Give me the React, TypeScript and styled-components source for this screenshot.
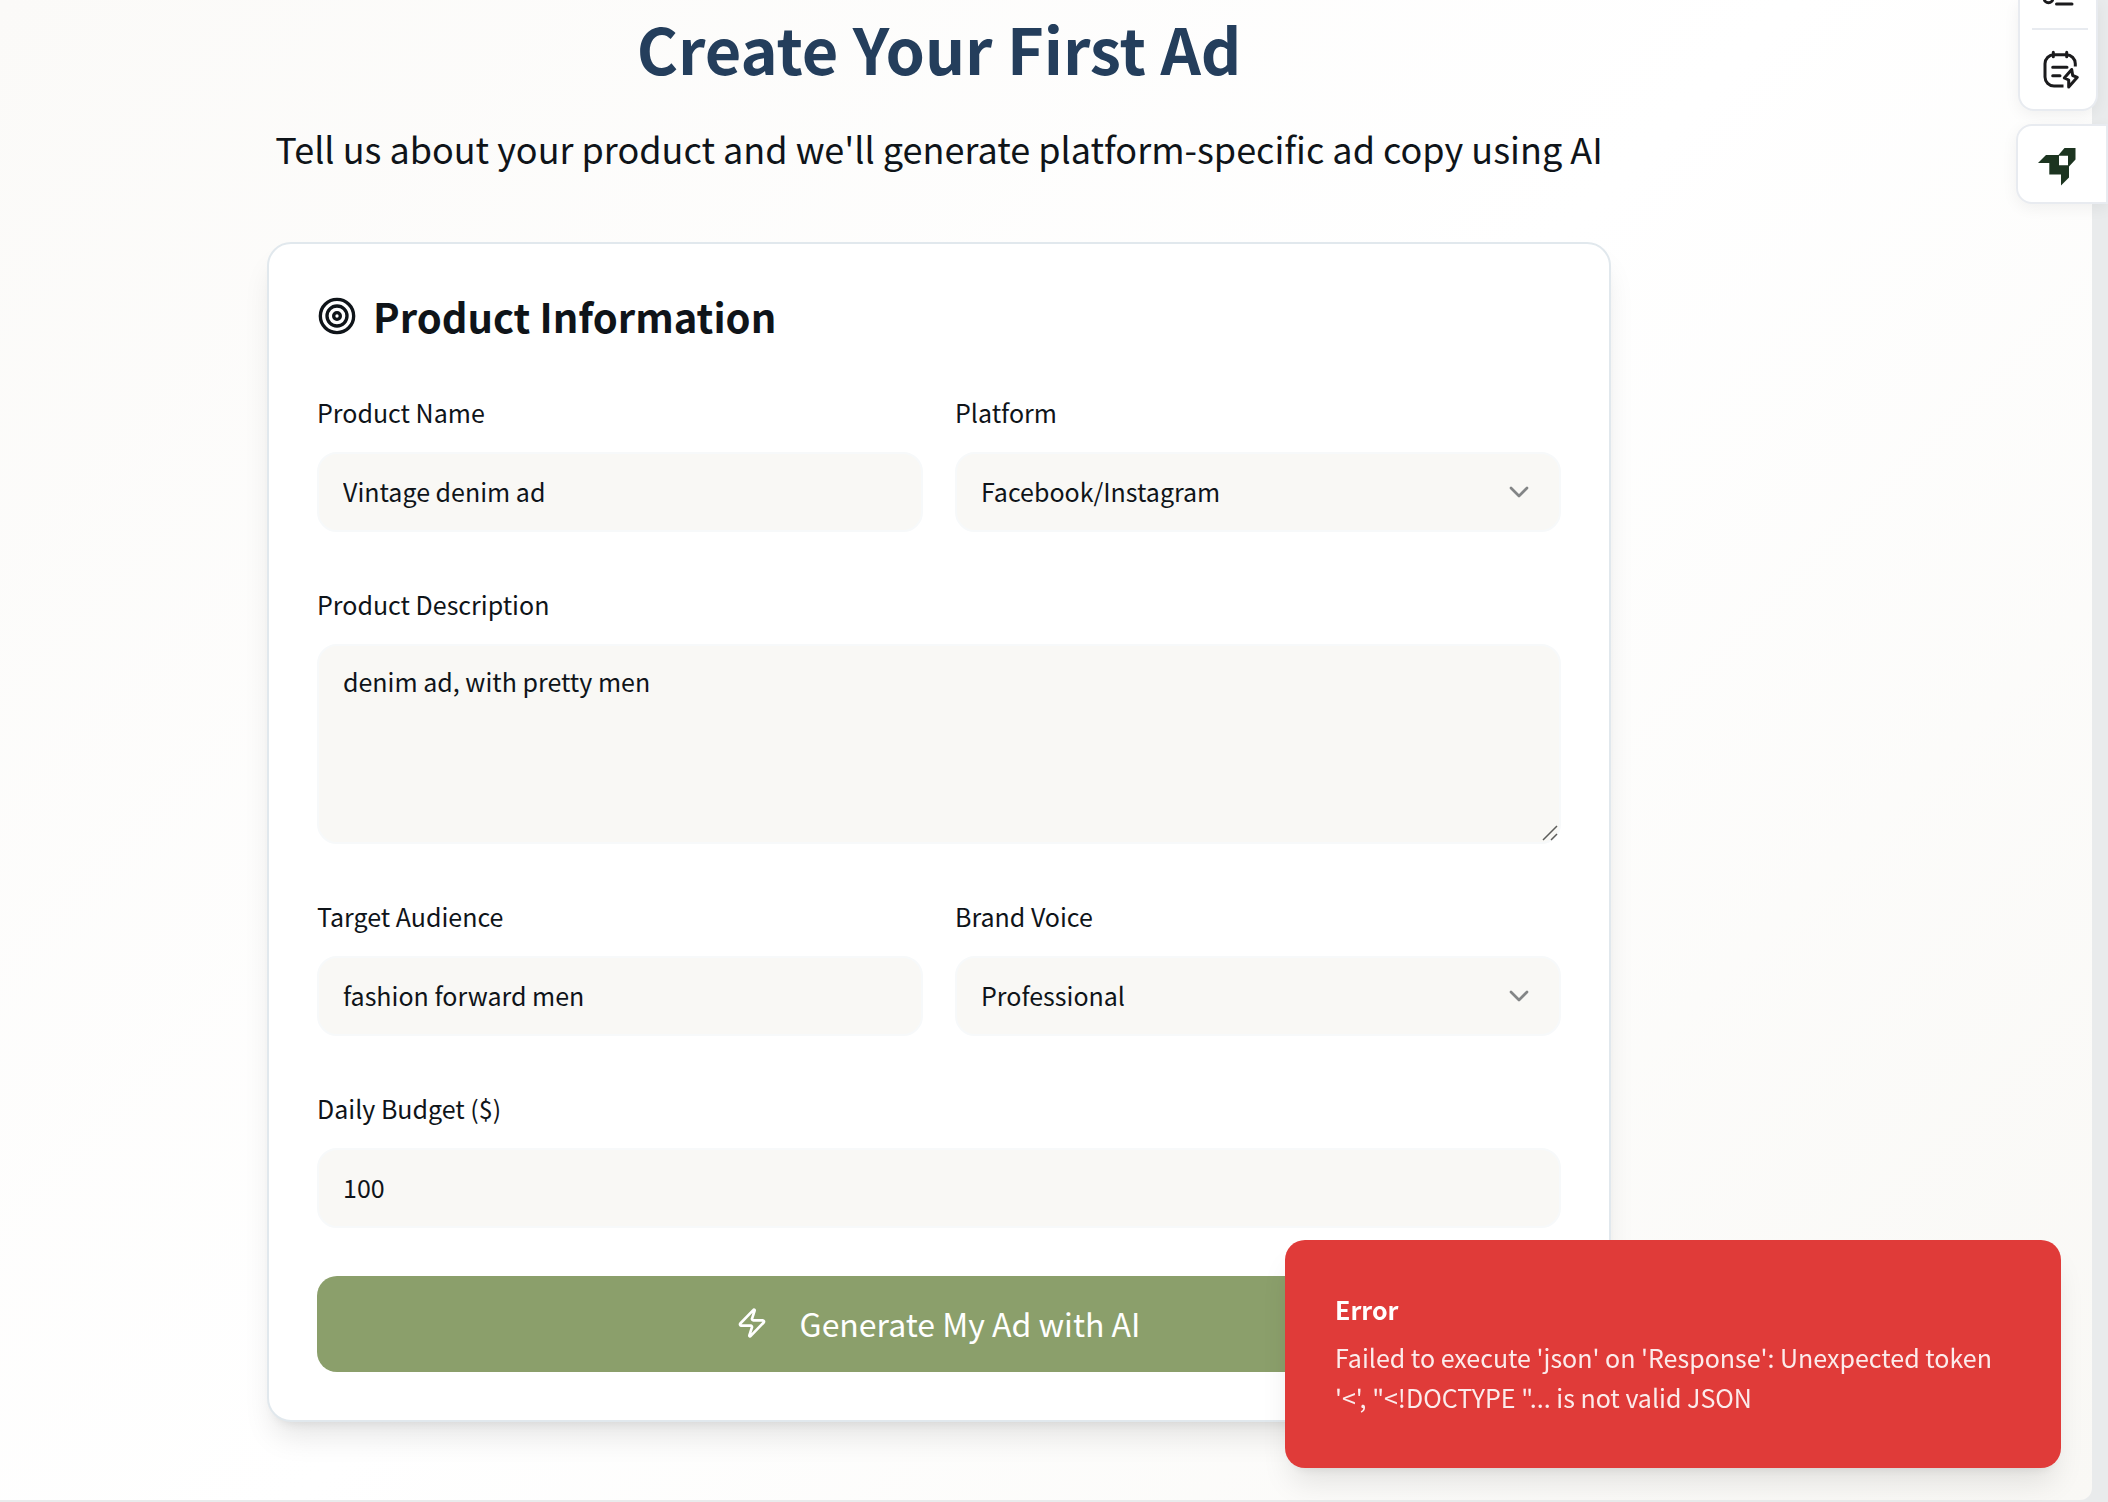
import React from "react";
import styled, { createGlobalStyle, css } from "styled-components";
import { ChevronDown, Target, Zap } from "lucide-react";

const ink = "#0f1419";
const line = "#e1e8ed";
const sans = `"Noto Sans CJK JP", "Noto Sans CJK SC", "Noto Sans", sans-serif`;

const GlobalStyle = createGlobalStyle`
  *, *::before, *::after { box-sizing: border-box; }
  body { margin: 0; background: #e9ebec; color: ${ink}; font-family: ${sans}; }
  h1, h2, p { margin: 0; }
  input, select, textarea, button { font: inherit; color: inherit; }
`;

const Shell = styled.div`
  display: flex;
  min-height: 100vh;
  padding: 0 16px 2px 0;
  overflow: hidden;
`;

const Page = styled.main`
  flex: 1;
  display: flex;
  flex-direction: column;
  align-items: center;
  padding: 8px 214px 78px 0;
  border-radius: 0 0 12px 0;
  background: linear-gradient(135deg, #fbfaf8 0%, #ffffff 50%, #f9f8f5 100%);
`;

const Title = styled.h1`
  font-size: 63px;
  line-height: 80px;
  font-weight: 600;
  color: #243e5c;
`;

const Lead = styled.p`
  margin: 28px 0 62px;
  font-size: 36px;
  line-height: 64px;
`;

const Card = styled.form`
  display: flex;
  flex-direction: column;
  gap: 48px;
  width: 100%;
  max-width: 1344px;
  padding: 48px;
  border: 2px solid ${line};
  border-radius: 24px;
  background: #fff;
  box-shadow: 0 20px 30px -6px rgba(0, 0, 0, 0.1), 0 8px 12px -8px rgba(0, 0, 0, 0.1);
`;

const CardTitle = styled.h2`
  display: flex;
  align-items: center;
  gap: 16px;
  font-size: 40px;
  line-height: 48px;
  font-weight: 600;
`;

const Row = styled.div`
  display: grid;
  grid-template-columns: 1fr 1fr;
  gap: 32px;
`;

const Field = styled.div`
  display: flex;
  flex-direction: column;
  gap: 16px;
`;

const Label = styled.label`
  font-size: 25px;
  line-height: 48px;
`;

const control = css`
  width: 100%;
  height: 80px;
  padding: 0 24px 2px;
  border: 2px solid #f7f9fa;
  border-radius: 20px;
  background: #f9f8f5;
  font-size: 25px;
  outline: none;
`;

const Input = styled.input`
  ${control}
`;

const Select = styled.select`
  ${control}
  appearance: none;
`;

const TextArea = styled.textarea`
  ${control}
  display: block;
  height: 200px;
  padding: 15px 24px;
  line-height: 40px;
  resize: none;
`;

const Stack = styled.div`
  display: grid;

  > * { grid-area: 1 / 1; }
  > svg { pointer-events: none; }
`;

const Caret = styled(ChevronDown)`
  place-self: center end;
  margin-right: 26px;
  opacity: 0.5;
`;

const Grip = styled.svg`
  place-self: end;
  margin: 0 3px 3px 0;
`;

const Submit = styled.button`
  display: flex;
  align-items: center;
  justify-content: center;
  gap: 32px;
  height: 96px;
  padding: 0 2px 2px 0;
  border: 0;
  border-radius: 20px;
  background: #8b9f6b;
  color: #fff;
  font-size: 32px;
`;

const Toast = styled.div`
  position: fixed;
  right: 47px;
  bottom: 34px;
  display: flex;
  flex-direction: column;
  gap: 8px;
  width: 776px;
  padding: 49px 50px 51px;
  border-radius: 20px;
  background: #e03b39;
  color: #fff;
  font-size: 25px;
  line-height: 40px;
  box-shadow: 0 20px 30px -6px rgba(0, 0, 0, 0.1), 0 8px 12px -8px rgba(0, 0, 0, 0.1);
`;

const ToastTitle = styled.strong`
  font-weight: 600;
`;

const ToastText = styled.p`
  opacity: 0.9;
`;

const Dock = styled.aside`
  position: fixed;
  top: 0;
  right: 0;
  display: flex;
  flex-direction: column;
  align-items: flex-end;
  gap: 13px;
`;

const Tools = styled.div`
  display: flex;
  flex-direction: column;
  align-items: center;
  width: 80px;
  height: 111px;
  margin-right: 10px;
  padding-left: 4px;
  border: 2px solid #e8ebf0;
  border-top: 0;
  border-radius: 0 0 16px 16px;
  background: #fff;
  box-shadow: 0 4px 16px rgba(0, 0, 0, 0.06);
`;

const ToolButton = styled.button`
  display: flex;
  align-items: center;
  justify-content: center;
  width: 100%;
  height: 80px;
  padding: 0 0 0 4px;
  border: 0;
  background: none;
`;

const ClippedTool = styled(ToolButton)`
  align-items: flex-start;
  height: 28px;
`;

const Divider = styled.hr`
  flex: none;
  width: 56px;
  height: 2px;
  margin: 0;
  border: 0;
  background: #e8ebf0;
`;

const Launcher = styled.button`
  display: flex;
  align-items: center;
  width: 92px;
  height: 80px;
  padding: 6px 0 0 20px;
  border: 2px solid #e8ebf0;
  border-radius: 16px 0 0 16px;
  background: #fff;
  box-shadow: 0 4px 16px rgba(0, 0, 0, 0.06);
`;

type FieldProps = { id: string; label: string; value: string };

function TextField({ id, label, value }: FieldProps) {
  return (
    <Field>
      <Label htmlFor={id}>{label}</Label>
      <Input id={id} defaultValue={value} />
    </Field>
  );
}

function SelectField({ id, label, value }: FieldProps) {
  return (
    <Field>
      <Label htmlFor={id}>{label}</Label>
      <Stack>
        <Select id={id} defaultValue={value}>
          <option>{value}</option>
        </Select>
        <Caret size={32} />
      </Stack>
    </Field>
  );
}

function ListIcon() {
  return (
    <svg width="40" height="8" viewBox="0 0 40 8" fill="none" stroke="#1b1b1d" strokeWidth="3" strokeLinecap="round">
      <path d="M2.200 -1.500a4.300 4.300 0 0 0 8.600 0M14.500 4H30" />
    </svg>
  );
}

function NotesIcon() {
  return (
    <svg width="40" height="40" viewBox="0 0 40 40" fill="none" stroke="#1b1b1d" strokeWidth="3" strokeLinecap="round" strokeLinejoin="round">
      <path strokeLinecap="butt" d="M21.500 37H12a9 9 0 0 1-9-9V14.700a9 9 0 0 1 9-9H24.300a9 9 0 0 1 9 9V17.500" />
      <path d="M11.300 3.300V7.700M24.700 3.300V7.700M10.700 18.300H25M10.700 26.700H18" />
      <path d="M29.700 20.500 22.300 29 26.700 31V38L35.300 28.300 30.700 26.500Z" />
    </svg>
  );
}

function RocketLogo() {
  return (
    <svg width="38" height="38" viewBox="0 0 38 38">
      <path
        fill="#1c3420"
        fillRule="evenodd"
        d="M0 15 8 7H20.500L26.500 0H37.500V11.500L31 18.500V29.500L23 37.500V26.500H11.300V15ZM21 7.700V17.300H30V7.700Z"
      />
    </svg>
  );
}

export default function App() {
  return (
    <>
      <GlobalStyle />
      <Shell>
        <Page>
          <Title>Create Your First Ad</Title>
          <Lead>Tell us about your product and we'll generate platform-specific ad copy using AI</Lead>
          <Card onSubmit={(e) => e.preventDefault()}>
            <CardTitle>
              <Target size={40} />
              Product Information
            </CardTitle>
            <Row>
              <TextField id="name" label="Product Name" value="Vintage denim ad" />
              <SelectField id="platform" label="Platform" value="Facebook/Instagram" />
            </Row>
            <Field>
              <Label htmlFor="description">Product Description</Label>
              <Stack>
                <TextArea id="description" defaultValue="denim ad, with pretty men" />
                <Grip width="16" height="16" viewBox="0 0 16 16" stroke="#5c5c5a" strokeWidth="1.500">
                  <path d="M1 15 15 1M9 15 15 9" />
                </Grip>
              </Stack>
            </Field>
            <Row>
              <TextField id="audience" label="Target Audience" value="fashion forward men" />
              <SelectField id="voice" label="Brand Voice" value="Professional" />
            </Row>
            <TextField id="budget" label="Daily Budget ($)" value="100" />
            <Submit type="submit">
              <Zap size={32} />
              Generate My Ad with AI
            </Submit>
          </Card>
        </Page>
      </Shell>
      <Dock>
        <Tools>
          <ClippedTool type="button" aria-label="Lists">
            <ListIcon />
          </ClippedTool>
          <Divider />
          <ToolButton type="button" aria-label="Quick notes">
            <NotesIcon />
          </ToolButton>
        </Tools>
        <Launcher type="button" aria-label="Open assistant">
          <RocketLogo />
        </Launcher>
      </Dock>
      <Toast role="alert">
        <ToastTitle>Error</ToastTitle>
        <ToastText>Failed to execute 'json' on 'Response': Unexpected token '&lt;', "&lt;!DOCTYPE "... is not valid JSON</ToastText>
      </Toast>
    </>
  );
}
